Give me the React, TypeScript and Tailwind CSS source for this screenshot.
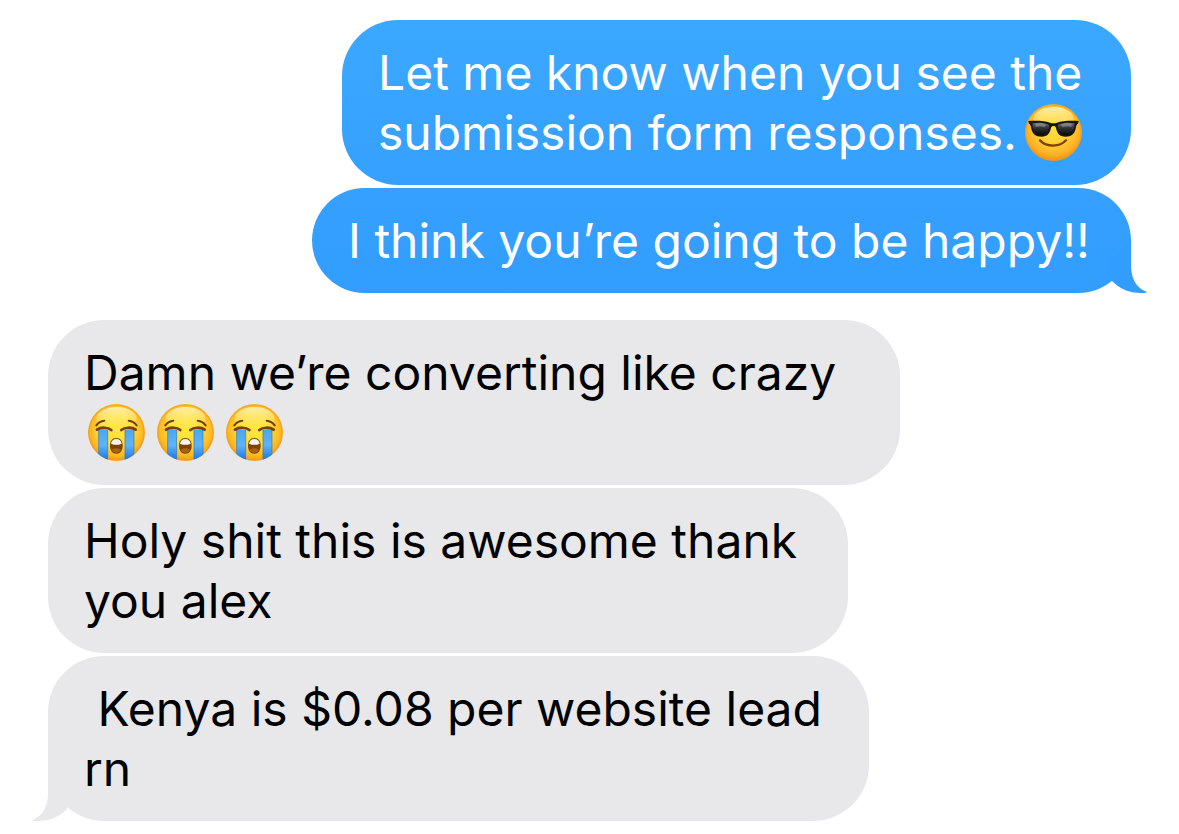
import React from 'react';
import clsx from 'clsx';

const SunglassesEmoji = () => (
  <svg
    role="img"
    aria-label="smiling face with sunglasses"
    viewBox="0 0 171 171"
    className="inline-block w-[57px] h-[57px] ml-2 mr-1 align-[-11px]"
  >
    <defs>
      <radialGradient id="coolFace" cx="0.5" cy="0.42" r="0.6">
        <stop offset="0" stopColor="#ffdf3e" />
        <stop offset="0.5" stopColor="#ffcf35" />
        <stop offset="0.8" stopColor="#fdb022" />
        <stop offset="1" stopColor="#f08a0c" />
      </radialGradient>
      <linearGradient id="coolShine" x1="0" y1="0" x2="0" y2="1">
        <stop offset="0" stopColor="#fffbd6" stopOpacity="0.75" />
        <stop offset="1" stopColor="#fff27a" stopOpacity="0" />
      </linearGradient>
      <linearGradient id="coolLens" x1="0" y1="0" x2="0" y2="1">
        <stop offset="0" stopColor="#6b6b6b" />
        <stop offset="0.45" stopColor="#303030" />
        <stop offset="1" stopColor="#0a0a0a" />
      </linearGradient>
    </defs>
    <circle cx="85.5" cy="85.5" r="85" fill="url(#coolFace)" />
    <circle cx="85.5" cy="85.5" r="83" fill="none" stroke="#f39a1c" strokeWidth="4" opacity="0.6" />
    <ellipse cx="85.5" cy="44" rx="60" ry="35" fill="url(#coolShine)" />
    <path d="M10 51 C32 49 59 50 75 56 C82 58 89 58 96 56 C112 50 139 49 161 51 L159 59 C155 61 154 64 153 69 C150 90 139 98 121 98 C104 98 97 89 93 72 C91 64 80 64 78 72 C74 89 67 98 50 98 C32 98 21 90 18 69 C17 64 16 61 12 59 Z" fill="#151515" />
    <path d="M23 58 C37 55 58 56 70 61 C74 64 73 69 71 75 C67 88 61 93 50 93 C35 93 27 87 24 72 C23 67 22 61 23 58 Z" fill="url(#coolLens)" />
    <path d="M148 58 C134 55 113 56 101 61 C97 64 98 69 100 75 C104 88 110 93 121 93 C136 93 144 87 147 72 C148 67 149 61 148 58 Z" fill="url(#coolLens)" />
    <path d="M31 59 C41 57 55 58 65 62 L57 70 C49 66 39 66 32 70 Z M140 59 C130 57 116 58 106 62 L114 70 C122 66 132 66 139 70 Z" fill="#ffffff" opacity="0.25" />
    <path d="M45 109 C65 130 104 130 123 109" fill="none" stroke="#824008" strokeWidth="7" strokeLinecap="round" />
  </svg>
);

const CryingEmoji = () => (
  <svg
    role="img"
    aria-label="loudly crying face"
    viewBox="0 0 171 171"
    className="inline-block w-[57px] h-[57px] ml-1 mr-2 align-[-11px]"
  >
    <defs>
      <radialGradient id="cryFace" cx="0.5" cy="0.45" r="0.58">
        <stop offset="0" stopColor="#ffe83d" />
        <stop offset="0.5" stopColor="#ffdb36" />
        <stop offset="0.8" stopColor="#fdb722" />
        <stop offset="1" stopColor="#ef8d12" />
      </radialGradient>
      <linearGradient id="cryShine" x1="0" y1="0" x2="0" y2="1">
        <stop offset="0" stopColor="#fffbd6" stopOpacity="0.75" />
        <stop offset="1" stopColor="#fff27a" stopOpacity="0" />
      </linearGradient>
      <linearGradient id="tears" x1="0" y1="0" x2="0" y2="1">
        <stop offset="0" stopColor="#4ea5ea" />
        <stop offset="0.5" stopColor="#5fb4f8" />
        <stop offset="1" stopColor="#1672e4" />
      </linearGradient>
      <clipPath id="cryClip">
        <circle cx="85.5" cy="85.5" r="85" />
      </clipPath>
    </defs>
    <circle cx="85.5" cy="85.5" r="85" fill="url(#cryFace)" />
    <circle cx="85.5" cy="85.5" r="83" fill="none" stroke="#f39a1c" strokeWidth="4" opacity="0.6" />
    <ellipse cx="85.5" cy="44" rx="60" ry="35" fill="url(#cryShine)" />
    <g clipPath="url(#cryClip)">
      <path d="M32 78 Q45 73 59 78 V171 H32 Z M111 78 Q125 73 138 78 V171 H111 Z" fill="url(#tears)" />
      <path d="M32 78 V171 M59 78 V171 M111 78 V171 M138 78 V171" stroke="#2378c5" strokeWidth="3" opacity="0.65" />
    </g>
    <path d="M27 77 C38 69 60 69 70 78 M100 78 C110 69 132 69 143 77" fill="none" stroke="#7d3d06" strokeWidth="8" strokeLinecap="round" />
    <path d="M25 64 C30 57 38 51 49 50 M122 50 C133 51 141 57 146 64" fill="none" stroke="#70400c" strokeWidth="6" strokeLinecap="round" />
    <path d="M85 102 C98 102 104 112 104 125 C104 139 97 149 85 149 C73 149 66 139 66 125 C66 112 72 102 85 102 Z" fill="#7e4307" />
    <path d="M85 105 C94 105 100 111 101 119 Q85 126 69 119 C70 111 76 105 85 105 Z" fill="#f6f5f2" />
    <path d="M71 138 C77 131 93 131 99 138 C96 143 91 146 85 146 C79 146 74 143 71 138 Z" fill="#a8660b" />
  </svg>
);

const Tail = ({ sent }: { sent?: boolean }) => (
  <svg
    aria-hidden="true"
    viewBox="0 0 60 56"
    className={clsx(
      'absolute bottom-0 w-[60px] h-[56px]',
      sent ? '-right-[17px] text-[#319dfe]' : '-left-[17px] -scale-x-100 text-[#e8e8ea]'
    )}
  >
    <path d="M43 4 V28 C43 41 48 51 59 55 C58 56 56 56 53 56 C41 56 32 52 24 44 L20 24 Z" fill="currentColor" />
  </svg>
);

interface BubbleProps {
  sent?: boolean;
  tail?: boolean;
  className?: string;
  children: React.ReactNode;
}

const Bubble = ({ sent, tail, className, children }: BubbleProps) => (
  <li
    className={clsx(
      'relative max-w-full rounded-[56px] px-9 pt-[23px] pb-[22px] whitespace-pre-wrap',
      sent ? 'self-end text-white' : 'self-start bg-[#e8e8ea] text-black',
      className
    )}
  >
    {tail && <Tail sent={sent} />}
    <p className="relative">{children}</p>
  </li>
);

const App = () => {
  return (
    <main className="bg-white px-12 pt-5 pb-3 font-['Inter','Liberation_Sans',sans-serif] text-[48px] leading-[60px]">
      <div className="flex flex-col gap-[27px]">
        <ul className="flex flex-col gap-[3px]">
          <Bubble sent className="w-[789px] bg-linear-to-b from-[#3ba8ff] to-[#35a0fe]">
            Let me know when you see the submission form responses.
            <SunglassesEmoji />
          </Bubble>
          <Bubble sent tail className="w-[819px] bg-linear-to-b from-[#35a0fe] to-[#319dfe]">
            I think you’re going to be happy!!
          </Bubble>
        </ul>

        <ul className="flex flex-col gap-[3px]">
          <Bubble className="w-[852px]">
            Damn we’re converting like crazy <CryingEmoji />
            <CryingEmoji />
            <CryingEmoji />
          </Bubble>
          <Bubble className="w-[800px]">Holy shit this is awesome thank you alex</Bubble>
          <Bubble tail className="w-[821px]">
            {' Kenya is $0.08 per website lead rn'}
          </Bubble>
        </ul>
      </div>
    </main>
  );
};

export default App;
